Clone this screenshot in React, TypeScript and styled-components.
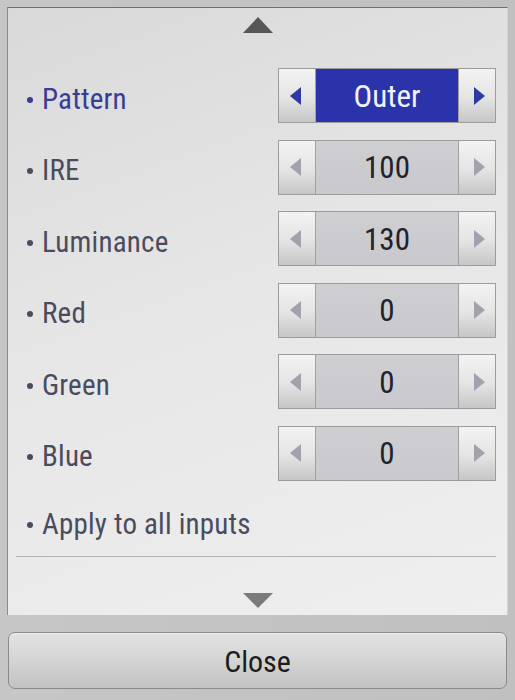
import React from "react";
import styled, { createGlobalStyle } from "styled-components";

const Global = createGlobalStyle`
  html, body { margin: 0; padding: 0; }
  body {
    background: #c3c3c3;
    font-family: "Liberation Sans Narrow", "Roboto Condensed", "Liberation Sans", sans-serif;
  }
`;

const Screen = styled.div`
  width: 515px;
  height: 700px;
  box-sizing: border-box;
  padding: 7px 7px 0 7px;
  background: linear-gradient(90deg, #c6c6c6 0%, #c0c0c0 100%);
  display: flex;
  flex-direction: column;
`;

const Panel = styled.div`
  width: 501px;
  height: 608px;
  box-sizing: border-box;
  border-top: 1px solid #707070;
  border-left: 1px solid #8a8a8a;
  border-right: 1px solid #d4d4d4;
  background: linear-gradient(160deg, #d9d9d9 0%, #e6e6e6 45%, #efefef 100%);
  display: flex;
  flex-direction: column;
`;

const TopArrowArea = styled.div`
  height: 52px;
  flex: none;
  display: flex;
  justify-content: center;
  align-items: flex-start;
`;

const BottomArrowArea = styled.div`
  flex: 1;
  display: flex;
  justify-content: center;
  align-items: flex-start;
`;

const Triangle = styled.div<{ $down?: boolean; $top: number }>`
  margin-top: ${(p) => p.$top}px;
  margin-left: 1px;
  width: 0;
  height: 0;
  border-left: 15px solid transparent;
  border-right: 15px solid transparent;
  ${(p) =>
    p.$down
      ? "border-top: 15px solid #7a7a7a;"
      : "border-bottom: 16px solid #575757;"}
`;

const List = styled.div`
  display: flex;
  flex-direction: column;
`;

const Row = styled.div<{ $last?: boolean }>`
  height: ${(p) => (p.$last ? 67 : 71.5)}px;
  box-sizing: border-box;
  display: flex;
  align-items: center;
  justify-content: space-between;
  padding: 0 11px ${(p) => (p.$last ? 4 : 0)}px 19px;
`;

const Label = styled.div<{ $active?: boolean }>`
  display: flex;
  align-items: center;
  font-size: 29px;
  padding-top: 6px;
  color: ${(p) => (p.$active ? "#3a3b94" : "#4a4c5e")};
  letter-spacing: 0.2px;
`;

const Bullet = styled.span<{ $active?: boolean }>`
  width: 6px;
  height: 6px;
  border-radius: 50%;
  background: ${(p) => (p.$active ? "#3a3b94" : "#4a4c5e")};
  margin-right: 9px;
  margin-top: 2px;
`;

const Control = styled.div`
  width: 218px;
  height: 55px;
  box-sizing: border-box;
  border: 1px solid #9c9c9c;
  display: flex;
  background: #c8c8cc;
`;

const StepButton = styled.div<{ $side: "left" | "right" }>`
  width: 36px;
  flex: none;
  display: flex;
  align-items: center;
  justify-content: center;
  background: linear-gradient(180deg, #f3f3f3 0%, #e4e4e4 55%, #c6c6c6 100%);
  ${(p) =>
    p.$side === "left"
      ? "border-right: 1px solid #a0a0a0;"
      : "border-left: 1px solid #a0a0a0;"}
`;

const Arrow = styled.div<{ $dir: "left" | "right"; $active?: boolean }>`
  width: 0;
  height: 0;
  border-top: 9px solid transparent;
  border-bottom: 9px solid transparent;
  ${(p) =>
    p.$dir === "left"
      ? `border-right: 11px solid ${p.$active ? "#2e3aa2" : "#a2a2ae"}; margin-right: 4px;`
      : `border-left: 11px solid ${p.$active ? "#2e3aa2" : "#a2a2ae"}; margin-left: 4px;`}
`;

const Value = styled.div<{ $active?: boolean }>`
  flex: 1;
  display: flex;
  align-items: center;
  justify-content: center;
  font-size: 31px;
  color: ${(p) => (p.$active ? "#f2f2f6" : "#222228")};
  background: ${(p) =>
    p.$active
      ? "#2b33ab"
      : "linear-gradient(180deg, #cfcfd3 0%, #c8c8cd 100%)"};
  padding-top: 1px;
`;

const Separator = styled.div`
  height: 1px;
  flex: none;
  margin: 0 11px 0 8px;
  background: #b2b2b2;
`;

const Footer = styled.div`
  flex: 1;
  display: flex;
  flex-direction: column;
  padding-top: 17px;
`;

const CloseButton = styled.div`
  width: 499px;
  height: 57px;
  box-sizing: border-box;
  margin-left: 1px;
  border: 1px solid #8a8a8a;
  border-radius: 7px;
  background: linear-gradient(180deg, #e2e2e2 0%, #d4d4d4 50%, #c2c2c2 100%);
  box-shadow: inset 0 1px 0 #f0f0f0;
  display: flex;
  align-items: center;
  justify-content: center;
  font-size: 30px;
  color: #1c1c1c;
  padding-top: 2px;
`;

type Item = { label: string; value?: string; active?: boolean };

const items: Item[] = [
  { label: "Pattern", value: "Outer", active: true },
  { label: "IRE", value: "100" },
  { label: "Luminance", value: "130" },
  { label: "Red", value: "0" },
  { label: "Green", value: "0" },
  { label: "Blue", value: "0" },
  { label: "Apply to all inputs" },
];

export default function App() {
  return (
    <>
      <Global />
      <Screen>
        <Panel>
          <TopArrowArea>
            <Triangle $top={9} />
          </TopArrowArea>
          <List>
            {items.map((it) => (
              <Row key={it.label} $last={it.value === undefined}>
                <Label $active={it.active}>
                  <Bullet $active={it.active} />
                  {it.label}
                </Label>
                {it.value !== undefined && (
                  <Control>
                    <StepButton $side="left">
                      <Arrow $dir="left" $active={it.active} />
                    </StepButton>
                    <Value $active={it.active}>{it.value}</Value>
                    <StepButton $side="right">
                      <Arrow $dir="right" $active={it.active} />
                    </StepButton>
                  </Control>
                )}
              </Row>
            ))}
          </List>
          <Separator />
          <BottomArrowArea>
            <Triangle $down $top={36} />
          </BottomArrowArea>
        </Panel>
        <Footer>
          <CloseButton>Close</CloseButton>
        </Footer>
      </Screen>
    </>
  );
}
